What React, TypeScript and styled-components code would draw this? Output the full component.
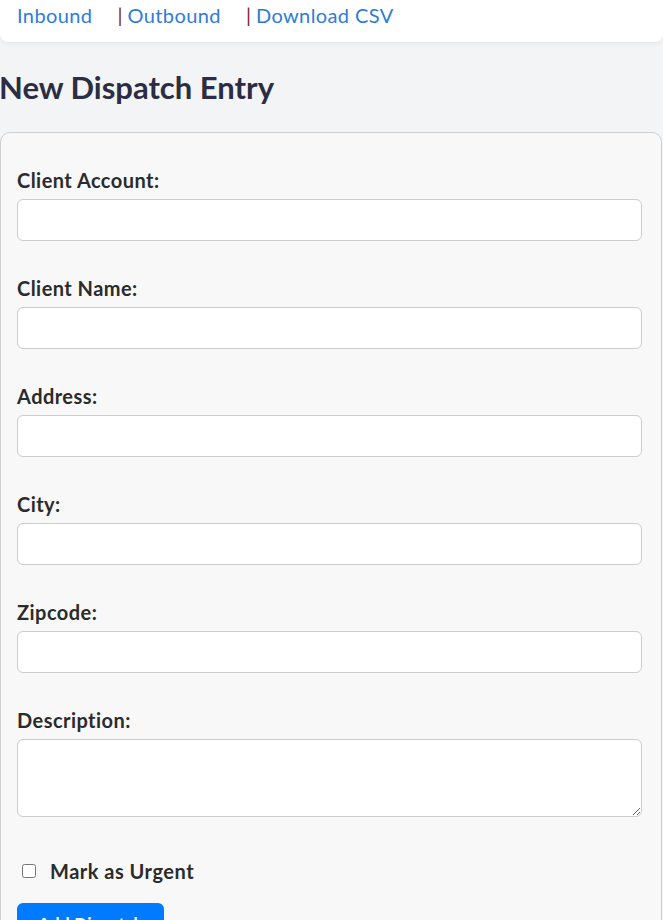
import React from "react";
import styled, { createGlobalStyle } from "styled-components";

const GlobalStyle = createGlobalStyle`
  html, body {
    margin: 0;
    padding: 0;
    background: #f3f4f6;
    font-family: Lato, "Noto Sans", sans-serif;
  }
  * { box-sizing: border-box; }
`;

const Page = styled.div`
  display: flex;
  flex-direction: column;
`;

const NavBar = styled.nav`
  display: flex;
  align-items: flex-start;
  height: 42px;
  padding: 3px 0 0 17px;
  background: #ffffff;
  border-radius: 0 0 8px 8px;
  box-shadow: 0 2px 4px rgba(0, 0, 0, 0.06);
`;

const NavLink = styled.a`
  font-size: 20px;
  line-height: 24px;
  letter-spacing: 0.4px;
  color: #2f7bd9;
  text-decoration: none;
  cursor: pointer;
`;

const Separator = styled.span`
  font-size: 20px;
  line-height: 24px;
  color: #7a2a14;
  margin: 0 5px 0 25px;
`;

const Heading = styled.h1`
  margin: 25px 0 25px -1px;
  font-size: 31px;
  line-height: 40px;
  font-weight: 700;
  color: #2b2d42;
`;

const Card = styled.form`
  display: flex;
  flex-direction: column;
  margin-right: 1px;
  padding: 35px 19px 40px 16px;
  background: #f8f8f8;
  border: 1px solid #cfcfcf;
  border-radius: 10px;
`;

const Field = styled.div`
  display: flex;
  flex-direction: column;
  margin-bottom: 35px;
`;

const Label = styled.label`
  display: block;
  font-size: 20px;
  line-height: 24px;
  letter-spacing: 0.45px;
  font-weight: 700;
  color: #2b2b2b;
  margin-bottom: 7px;
`;

const TextInput = styled.input`
  height: 42px;
  width: 100%;
  padding: 10px;
  font-size: 16px;
  background: #ffffff;
  border: 1px solid #cccccc;
  border-radius: 6px;
  font-family: inherit;
`;

const TextArea = styled.textarea`
  height: 78px;
  width: 100%;
  padding: 10px;
  font-size: 16px;
  background: #ffffff;
  border: 1px solid #cccccc;
  border-radius: 6px;
  font-family: inherit;
  resize: vertical;
`;

const CheckRow = styled.label`
  display: flex;
  align-items: center;
  margin-top: 7px;
  font-size: 20px;
  line-height: 24px;
  letter-spacing: 0.5px;
  font-weight: 700;
  color: #2b2b2b;
`;

const CheckBox = styled.input`
  width: 14px;
  height: 14px;
  margin: 0 14px 0 5px;
`;

const SubmitButton = styled.button`
  align-self: flex-start;
  margin-top: 20px;
  padding: 10px 21px;
  font-family: inherit;
  font-size: 17px;
  line-height: 22px;
  letter-spacing: 0.3px;
  font-weight: 700;
  color: #ffffff;
  background: #007bff;
  border: none;
  border-radius: 6px;
  cursor: pointer;
`;

const fields = ["Client Account:", "Client Name:", "Address:", "City:", "Zipcode:"];

export default function App() {
  return (
    <Page>
      <GlobalStyle />
      <NavBar>
        <NavLink>Inbound</NavLink>
        <Separator>|</Separator>
        <NavLink>Outbound</NavLink>
        <Separator>|</Separator>
        <NavLink>Download CSV</NavLink>
      </NavBar>
      <Heading>New Dispatch Entry</Heading>
      <Card onSubmit={(e) => e.preventDefault()}>
        {fields.map((f) => (
          <Field key={f}>
            <Label>{f}</Label>
            <TextInput type="text" />
          </Field>
        ))}
        <Field>
          <Label>Description:</Label>
          <TextArea />
        </Field>
        <CheckRow>
          <CheckBox type="checkbox" />
          Mark as Urgent
        </CheckRow>
        <SubmitButton type="submit">Add Dispatch</SubmitButton>
      </Card>
    </Page>
  );
}
